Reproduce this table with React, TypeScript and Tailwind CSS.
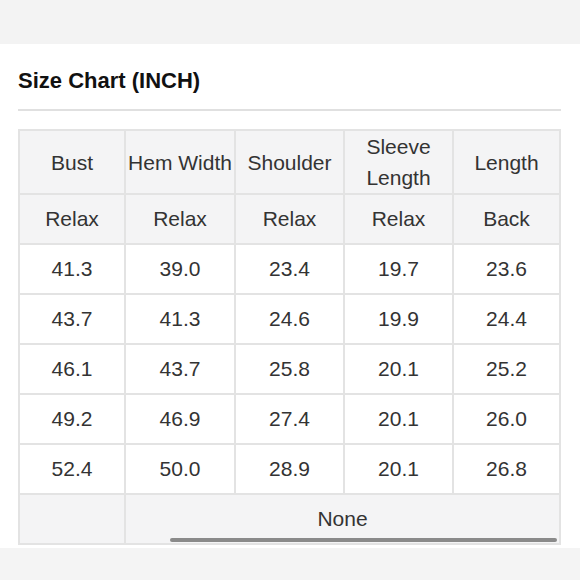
import React from "react";

const headers: React.ReactNode[] = [
  "Bust",
  "Hem Width",
  "Shoulder",
  <>
    Sleeve
    <br />
    Length
  </>,
  "Length",
];
const sub = ["Relax", "Relax", "Relax", "Relax", "Back"];
const rows = [
  ["41.3", "39.0", "23.4", "19.7", "23.6"],
  ["43.7", "41.3", "24.6", "19.9", "24.4"],
  ["46.1", "43.7", "25.8", "20.1", "25.2"],
  ["49.2", "46.9", "27.4", "20.1", "26.0"],
  ["52.4", "50.0", "28.9", "20.1", "26.8"],
];

export default function App() {
  return (
    <div
      className="w-[580px] h-[580px] bg-white flex flex-col overflow-hidden text-[#333]"
      style={{ fontFamily: '"Liberation Sans", Arial, sans-serif' }}
    >
      <div className="h-[44px] bg-[#f3f3f3] shrink-0" />
      <div className="pl-[18px] pr-[19px] flex flex-col">
        <h1 className="mt-[23px] text-[22px] leading-[28px] font-bold text-[#111]">Size Chart (INCH)</h1>
        <div className="mt-[14px] h-[2px] bg-[#e0e0e0]" />
        <div className="mt-[18px] grid grid-cols-[104px_108px_107px_107px_105px] gap-[2px] p-[2px] bg-[#e3e3e3] text-[21px]">
          {headers.map((h, i) => (
            <div key={"h" + i} className="h-[62px] bg-[#f4f4f5] flex items-center justify-center text-center leading-[31px] whitespace-nowrap">
              {h}
            </div>
          ))}
          {sub.map((s, i) => (
            <div key={"s" + i} className="h-[48px] bg-[#f4f4f5] flex items-center justify-center">
              {s}
            </div>
          ))}
          {rows.map((r, ri) =>
            r.map((c, ci) => (
              <div key={ri + "-" + ci} className="h-[48px] bg-white flex items-center justify-center">
                {c}
              </div>
            ))
          )}
          <div className="h-[48px] bg-[#f4f4f5]" />
          <div className="col-span-4 h-[48px] bg-[#f4f4f5] flex items-center justify-center relative">
            None
            <div className="absolute left-[44px] right-[2px] bottom-[1px] h-[4px] rounded-full bg-[#8a8a8a]" />
          </div>
        </div>
      </div>
      <div className="flex-1 mt-[3px] bg-[#f4f4f4]" />
    </div>
  );
}
